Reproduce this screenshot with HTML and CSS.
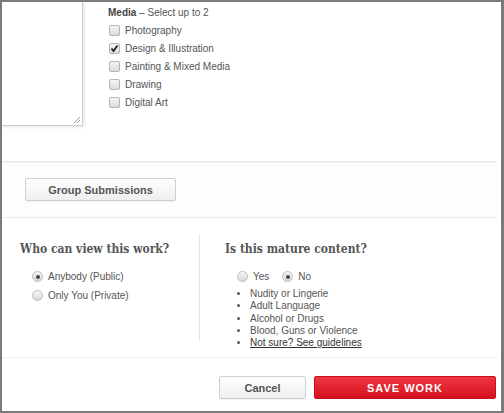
FILE: index.html
```html
<!DOCTYPE html>
<html lang="en">
<head>
    <link rel="stylesheet" href="styles.css">
</head>
<body>
    <div class="frame">
        <div class="top">
            <div class="description">
                <svg class="grip" width="8" height="8" viewBox="0 0 8 8">
                    <path d="M7 1 L1 7 M7 4 L4 7" stroke="#999" stroke-width="1" fill="none"/>
                </svg>
            </div>
            <div class="media">
                <div class="media-title"><b>Media</b> &ndash; Select up to 2</div>
                <label class="check-row"><span class="box"></span>Photography</label>
                <label class="check-row"><span class="box checked">
                    <svg width="9" height="9" viewBox="0 0 9 9"><path d="M1.5 4.5 L3.5 7 L7.5 1.5" stroke="#222" stroke-width="1.8" fill="none"/></svg>
                </span>Design &amp; Illustration</label>
                <label class="check-row"><span class="box"></span>Painting &amp; Mixed Media</label>
                <label class="check-row"><span class="box"></span>Drawing</label>
                <label class="check-row"><span class="box"></span>Digital Art</label>
            </div>
        </div>

        <div class="groups">
            <button class="btn btn-grey group-btn">Group Submissions</button>
        </div>

        <div class="options">
            <div class="col col-left">
                <h2>Who can view this work?</h2>
                <label class="radio-row"><span class="radio on"></span>Anybody (Public)</label>
                <label class="radio-row"><span class="radio"></span>Only You (Private)</label>
            </div>
            <div class="col col-right">
                <h2>Is this mature content?</h2>
                <div class="yes-no">
                    <label class="radio-row"><span class="radio"></span>Yes</label>
                    <label class="radio-row"><span class="radio on"></span>No</label>
                </div>
                <ul class="mature-list">
                    <li>Nudity or Lingerie</li>
                    <li>Adult Language</li>
                    <li>Alcohol or Drugs</li>
                    <li>Blood, Guns or Violence</li>
                    <li><a href="#">Not sure? See guidelines</a></li>
                </ul>
            </div>
        </div>

        <div class="footer">
            <button class="btn btn-grey cancel-btn">Cancel</button>
            <button class="btn save-btn">SAVE WORK</button>
        </div>
    </div>
</body>
</html>
```

FILE: styles.css
```css
body {
    margin: 0;
    padding: 0;
    font-family: "Liberation Sans", Arial, sans-serif;
    font-size: 10px;
    color: #555;
    background-color: #fff;
}

.frame {
    height: 413px;
    box-sizing: border-box;
    border-style: solid;
    border-color: #7a7a7a;
    border-width: 2px 3px 2px 2px;
    overflow: hidden;
}

.top {
    display: flex;
    height: 159px;
    border-bottom: 1px solid #e4e4e4;
    margin-right: 4px;
}

.description {
    position: relative;
    width: 80px;
    height: 123px;
    border-right: 1px solid #d0d0d0;
    border-bottom: 1px solid #d0d0d0;
    box-shadow: 1px 1px 3px rgba(0, 0, 0, 0.12);
}

.grip {
    position: absolute;
    right: 1px;
    bottom: 1px;
}

.media {
    margin-left: 25px;
    padding-top: 5px;
}

.media-title {
    height: 14px;
    line-height: 12px;
}

.media-title b {
    color: #444;
}

.check-row {
    display: flex;
    align-items: center;
    height: 18px;
}

.box {
    display: inline-block;
    position: relative;
    width: 9px;
    height: 9px;
    margin: 0 5px 0 1px;
    border: 1px solid #b5b5b5;
    border-radius: 2px;
    background: linear-gradient(#f4f4f4, #dcdcdc);
}

.box svg {
    position: absolute;
    left: 0;
    top: 0;
}

.groups {
    height: 56px;
    box-sizing: border-box;
    padding: 15px 0 0 23px;
    border-top: 1px solid #f6f6f6;
    border-bottom: 1px solid #ebebeb;
    margin-right: 4px;
    background-color: #fdfdfd;
}

.btn {
    font-family: "Liberation Sans", Arial, sans-serif;
    font-weight: bold;
    font-size: 11px;
    border-radius: 2px;
    cursor: pointer;
    padding: 0;
}

.btn-grey {
    color: #555;
    border: 1px solid #cfcfcf;
    background: linear-gradient(#ffffff, #eeeeee);
    box-shadow: 0 1px 1px rgba(0, 0, 0, 0.06);
}

.group-btn {
    width: 151px;
    height: 23px;
}

.options {
    display: flex;
    height: 139px;
    border-bottom: 1px solid #efefef;
    margin-right: 4px;
}

.col {
    margin-top: 16px;
    padding-top: 8px;
}

.col-left {
    width: 198px;
    box-sizing: border-box;
    padding-left: 18px;
    margin-bottom: 16px;
    border-right: 1px solid #e6e6e6;
}

.col-right {
    padding-left: 25px;
}

h2 {
    margin: 0 0 9px 0;
    font-family: "DejaVu Serif Condensed", "DejaVu Serif", Georgia, serif;
    font-stretch: condensed;
    font-size: 12px;
    font-weight: bold;
    color: #555;
    height: 16px;
}

.col-left .radio-row {
    margin-left: 12px;
}

.radio-row {
    display: flex;
    align-items: center;
    height: 19px;
}

.radio {
    display: inline-block;
    position: relative;
    width: 9px;
    height: 9px;
    margin-right: 5px;
    border: 1px solid #bdbdbd;
    border-radius: 50%;
    background: linear-gradient(#f6f6f6, #d8d8d8);
}

.radio.on::after {
    content: "";
    position: absolute;
    left: 2.5px;
    top: 2.5px;
    width: 4px;
    height: 4px;
    border-radius: 50%;
    background-color: #444;
}

.yes-no {
    display: flex;
    padding-left: 12px;
}

.yes-no .radio-row {
    margin-right: 13px;
}

.mature-list {
    margin: 2px 0 0 0;
    padding: 0 0 0 25px;
    list-style: disc;
}

.mature-list li {
    line-height: 12.3px;
}

.mature-list a {
    color: #333;
}

.footer {
    display: flex;
    justify-content: flex-end;
    padding: 18px 5px 0 0;
}

.cancel-btn {
    width: 87px;
    height: 23px;
    margin-right: 8px;
}

.save-btn {
    width: 182px;
    height: 23px;
    color: #fff;
    letter-spacing: 1px;
    border: 1px solid #c8101c;
    background: linear-gradient(#ef3543, #d5121f);
}
```
